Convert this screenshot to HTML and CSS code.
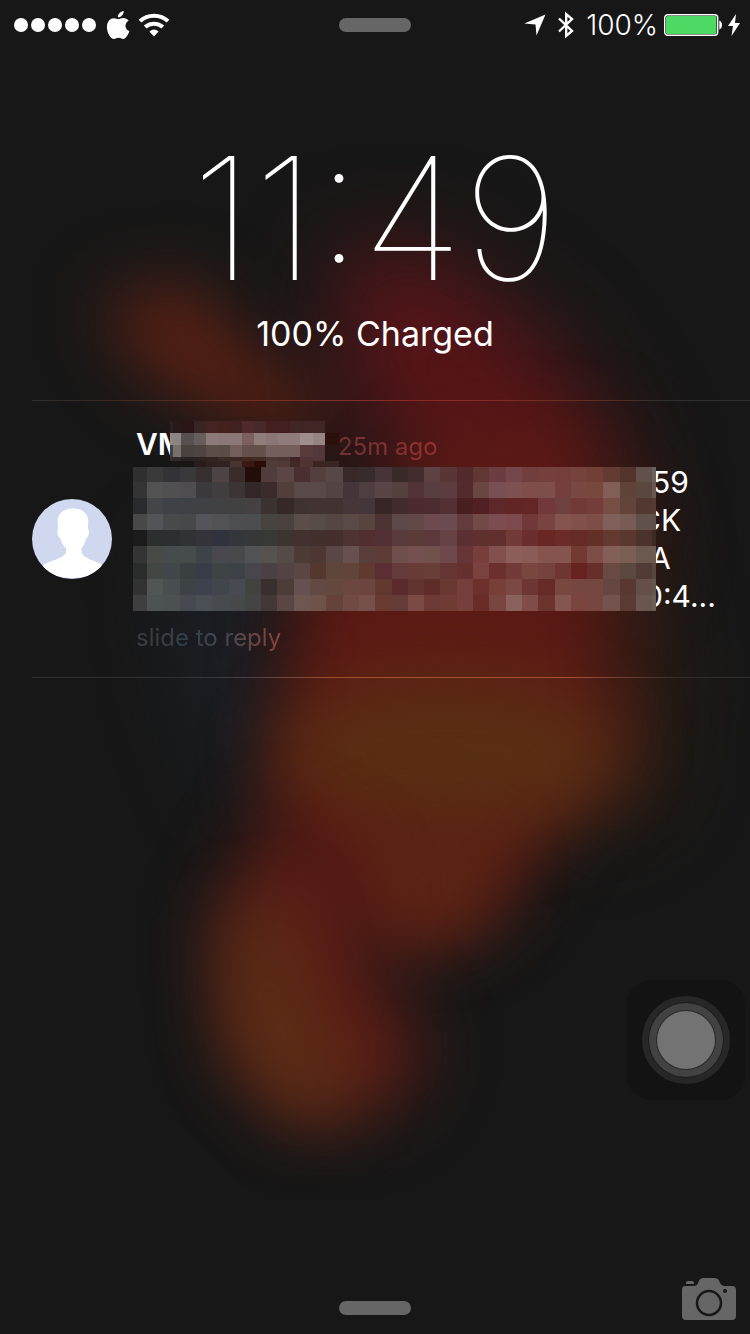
FILE: index.html
```
<!DOCTYPE html>
<html lang="en">
<head>
<meta charset="utf-8">
<meta name="viewport" content="width=device-width, initial-scale=1">
<title>Lock screen</title>
<link rel="stylesheet" href="styles.css">
</head>
<body>
<svg class="wallpaper" viewBox="0 0 750 1334" preserveAspectRatio="none" aria-hidden="true">
  <defs>
    <filter id="soft" x="-100%" y="-100%" width="300%" height="300%" color-interpolation-filters="sRGB"><feGaussianBlur stdDeviation="34"/></filter>
    <filter id="softer" x="-100%" y="-100%" width="300%" height="300%" color-interpolation-filters="sRGB"><feGaussianBlur stdDeviation="44"/></filter>
  </defs>
  <rect width="750" height="1334" fill="#171717"/>
  <path d="M100 300L190 280L250 350L330 400L310 450L210 410L140 370Z" fill="#5a2014" filter="url(#soft)"/>
  <path d="M330 260L420 240L550 340L620 440L640 560L560 620L450 500L350 420Z" fill="#561518" filter="url(#softer)"/>
  <path d="M590 400L650 520L680 660L670 800L590 850L600 600Z" fill="#2c1c14" filter="url(#soft)"/>
  <path d="M160 540H260L270 740L230 820L180 700Z" fill="#1b1e25" filter="url(#soft)"/>
  <path d="M300 570L450 430L570 430L610 600L620 740L560 820L490 920L400 960L330 900L270 790Z" fill="#5c1a14" filter="url(#soft)"/>
  <ellipse cx="450" cy="755" rx="170" ry="80" fill="#5a2e14" filter="url(#soft)"/>
  <ellipse cx="425" cy="880" rx="70" ry="55" fill="#5a2615" filter="url(#soft)"/>
  <path d="M270 810L350 850L380 980L430 1050L390 1110L300 1125L230 1050L215 920Z" fill="#5a1c16" filter="url(#soft)"/>
  <path d="M230 920L280 900L310 1010L360 1090L300 1120L235 1050Z" fill="#5c3016" filter="url(#soft)"/>
</svg>

<header class="status">
  <div class="status-side">
    <svg class="signal" width="82" height="14" viewBox="0 0 82 14" role="img" aria-label="Signal 5 of 5"><g fill="#fff"><circle cx="7" cy="7" r="7"/><circle cx="24" cy="7" r="7"/><circle cx="41" cy="7" r="7"/><circle cx="58" cy="7" r="7"/><circle cx="75" cy="7" r="7"/></g></svg>
    <svg width="24" height="28" viewBox="0 0 24 28" aria-hidden="true"><path fill="#fff" d="M17.800 0C17.900 3.300 15 6.500 11.900 6.300C11.600 3.200 14.700 .2 17.800 0ZM12.400 8.200C13.600 8.200 15.100 7 17.400 7C19.500 7 21.500 8 22.600 9.800C18 12.400 18.800 18.400 23.400 20.200C22.300 23.300 19.800 27.800 17.200 27.900C15.400 27.900 14.800 26.800 12.600 26.800C10.400 26.800 9.700 27.900 8 28C4.600 28 .9 21.600 .9 16C.9 10.300 4.500 7.200 7.800 7.200C9.800 7.200 11.400 8.200 12.400 8.200Z"/></svg>
    <svg width="32" height="24" viewBox="0 0 32 24" role="img" aria-label="Wi-Fi"><g fill="none" stroke="#fff" stroke-width="4"><path d="M2 8.200C9.500 .8 22.500 .8 30 8.200"/><path d="M7.200 14C12 9.500 20 9.500 24.800 14"/></g><path fill="#fff" d="M16 23.500L11.400 18.500Q16 14.500 20.600 18.500Z"/></svg>
  </div>
  <span class="grabber"></span>
  <div class="status-side status-right">
    <svg width="22" height="22" viewBox="0 0 22 22" role="img" aria-label="Location"><path fill="#fff" d="M21.500 .5L12.500 21.500L11.500 10.500L.3 9.500Z"/></svg>
    <svg class="bluetooth" width="16" height="28" viewBox="0 0 16 28" role="img" aria-label="Bluetooth"><path fill="none" stroke="#fff" stroke-width="2.400" d="M1 7.500L14 20L8.200 25V3L14 8L1 20.500"/></svg>
    <span class="percent">100%</span>
    <svg width="58" height="22" viewBox="0 0 58 22" role="img" aria-label="Battery full"><rect x=".7" y=".7" width="53" height="20.600" rx="3" fill="none" stroke="#fff" stroke-width="1.400"/><rect x="2" y="2" width="50.400" height="18" rx="1.500" fill="#4cd964"/><path fill="#fff" d="M55.300 6.500Q58 7.500 58 11T55.300 15.500Z"/></svg>
    <svg class="bolt" width="12" height="22" viewBox="0 0 12 22" role="img" aria-label="Charging"><path fill="#fff" d="M8 0L0 12H5L3.500 22L12 9H7Z"/></svg>
  </div>
</header>

<main class="screen">
  <section class="clock">
    <time class="time">11:49</time>
    <p class="charge">100% Charged</p>
  </section>

  <article class="notification">
    <svg class="avatar" viewBox="0 0 80 80" role="img" aria-label="Contact"><defs><clipPath id="round"><circle cx="40" cy="40" r="40"/></clipPath></defs><g clip-path="url(#round)"><rect width="80" height="80" fill="#d0d8f0"/><path fill="#fff" d="M26 26C24 15 31 9.500 41 9.500C51 9.500 58 15 56 26V30C58 31 57 38 54.500 39C53 43 52 47 49.500 49V54C53 60 62 61 70 66C67 75 53 79 40 79C27 79 14 75 11 66C20 61 30 60 34 54V49C31 47 29.500 43 28 39C25 38 25 31 26 30Z"/></g></svg>
    <div class="content">
      <div class="heading">
        <h2 class="sender">VM</h2>
        <span class="age">25m ago</span>
        <svg class="mask mask-name" width="169" height="46" viewBox="0 0 169 46" shape-rendering="crispEdges" aria-hidden="true"></svg>
      </div>
      <div class="message">
        <p><span class="gap" style="width:516px"></span>59</p>
        <p><span class="gap" style="width:503px"></span>CK</p>
        <p><span class="gap" style="width:514px"></span>A</p>
        <p><span class="gap" style="width:508px"></span>0:4...</p>
        <svg class="mask mask-text" width="523" height="144" viewBox="0 0 523 144" shape-rendering="crispEdges" aria-hidden="true"></svg>
      </div>
      <p class="hint">slide to reply</p>
    </div>
  </article>
</main>

<button class="assistive" type="button" aria-label="AssistiveTouch"><span class="ring"></span></button>

<footer class="bottom">
  <span class="grabber"></span>
  <button class="camera" type="button" aria-label="Camera"><svg width="54" height="42" viewBox="0 0 54 42"><path fill="#666" d="M4 6V5Q4 3 6 3H10Q12 3 12 5V6ZM3 8H13Q15 8 16 5L17 2.500Q18 0 21 0H33Q36 0 37 2.500L38 5Q39.500 8 42 8H50Q54 8 54 12V38Q54 42 50 42H4Q0 42 0 38V12Q0 8 3 8Z"/><circle cx="27" cy="25" r="12" fill="none" stroke="#171717" stroke-width="2.500"/><circle cx="43" cy="13" r="2" fill="#171717"/></svg></button>
</footer>
<script src="mosaic.js"></script>
</body>
</html>
```
FILE: styles.css
```
* {
  box-sizing: border-box;
}

body {
  position: relative;
  margin: 0;
  min-height: 100vh;
  display: flex;
  flex-direction: column;
  overflow-x: hidden;
  background: #171717;
  color: #fff;
  font-family: Inter, "Liberation Sans", sans-serif;
}

h2,
p {
  margin: 0;
}

svg {
  display: block;
  flex: none;
}

button {
  padding: 0;
  border: 0;
  background: none;
}

.wallpaper {
  position: absolute;
  inset: 0;
  width: 100%;
  height: 100%;
  z-index: -1;
}

.status {
  display: grid;
  grid-template-columns: 1fr auto 1fr;
  align-items: center;
  height: 50px;
  padding: 0 10px;
}

.status-side {
  display: flex;
  align-items: center;
  gap: 8px;
}

.status-right {
  justify-content: flex-end;
  gap: 6px;
}

.signal {
  margin: 0 2px 0 4px;
}

.bluetooth {
  margin: 0 6px;
}

.percent {
  font-size: 28px;
  font-weight: 300;
  line-height: 32px;
}

.grabber {
  width: 72px;
  height: 14px;
  border-radius: 7px;
  background: #666;
}

.clock {
  padding-top: 84px;
  text-align: center;
}

.time {
  display: block;
  font-size: 170px;
  font-weight: 100;
  line-height: 168px;
}

.charge {
  padding: 10px 0 44px;
  font-size: 34px;
  line-height: 44px;
}

.notification {
  display: flex;
  align-items: center;
  gap: 24px;
  margin-left: 32px;
  padding-bottom: 24px;
  background:
    linear-gradient(90deg, #303030, #3a2a20 10%, #7a3024 32%, #8c2a28 60%, #5a3020 80%, #303030 88%) top / 100% 1px no-repeat,
    linear-gradient(90deg, #303030 20%, #46404a 30%, #a0502c 42%, #a8503a 75%, #352c2a 90%, #303030) bottom / 100% 1px no-repeat;
}

.avatar {
  width: 80px;
  height: 80px;
  margin-top: 24px;
}

.content {
  flex: 1;
  min-width: 0;
}

.heading,
.message {
  position: relative;
}

.heading {
  display: flex;
  align-items: baseline;
  padding-top: 25px;
  height: 63px;
}

.sender {
  width: 202px;
  font-size: 30px;
  font-weight: 600;
  line-height: 38px;
}

.age {
  font-size: 24px;
  background: linear-gradient(90deg, #703030, #963030);
  background-clip: text;
  color: transparent;
}

.message {
  font-size: 30px;
  line-height: 38px;
  white-space: nowrap;
}

.gap {
  display: inline-block;
}

.mask {
  position: absolute;
}

.mask-name {
  left: 34px;
  top: 21px;
}

.mask-text {
  left: -3px;
  top: 4px;
}

.hint {
  width: max-content;
  padding-top: 7px;
  font-size: 24px;
  line-height: 32px;
  background: linear-gradient(90deg, #3c3c3e, #343f4a 35%, #4c464e 65%, #8a4438);
  background-clip: text;
  color: transparent;
}

.assistive {
  position: fixed;
  right: 4px;
  bottom: 234px;
  display: grid;
  place-items: center;
  width: 120px;
  height: 120px;
  border-radius: 26px;
  background: #131313;
}

.ring {
  width: 58px;
  height: 58px;
  border-radius: 50%;
  background: #737373;
  box-shadow: 0 0 0 1px #292929, 0 0 0 8px #424242, 0 0 0 9px #1c1c1c, 0 0 0 15px #272727;
}

.bottom {
  display: grid;
  grid-template-columns: 1fr auto 1fr;
  align-items: center;
  margin-top: auto;
  padding: 0 14px 14px;
}

.bottom .grabber {
  grid-column: 2;
  margin-top: 18px;
}

.camera {
  justify-self: end;
}
```
FILE: mosaic.js
```
const NS = "http://www.w3.org/2000/svg";

// Fills a mask with blocks; xs and ys are the block edges, rows the colours.
function drawMosaic(selector, xs, ys, rows) {
  const svg = document.querySelector(selector);
  rows.forEach((row, r) => {
    row.split(" ").forEach((color, c) => {
      if (color === "-") return;
      const rect = document.createElementNS(NS, "rect");
      rect.setAttribute("x", xs[c]);
      rect.setAttribute("y", ys[r]);
      rect.setAttribute("width", xs[c + 1] - xs[c]);
      rect.setAttribute("height", ys[r + 1] - ys[r]);
      rect.setAttribute("fill", "#" + color);
      svg.appendChild(rect);
    });
  });
}

const textEdges = [0];
for (let i = 0; i <= 31; i++) textEdges.push(Math.round(14 + i * 16.3));
textEdges.push(523);

drawMosaic(".mask-text", textEdges, [0, 15, 31, 47, 63, 79, 96, 112, 128, 144], [
  "2f2f2f 3a3a3a 333236 393939 352f2f 4d4345 3a2c2a 230d0b 503d3b 5c4645 47302f 523f3e 574847 362928 382b2b 473437 3a2929 432c2d 5f4242 5a3535 522a2b 603734 6c3d40 75474a 723d3d 743f3d 743e3b 75423c 713e38 623c33 53332c 62514b 6a615d",
  "343434 525252 505050 504d50 3b393c 423e40 3b3635 332627 3c2b2b 503f3b 594a49 594a49 534443 45353a 4e3e40 5a4546 54403e 523236 593e41 5c3c3e 532b2e 6b4542 784f52 7f5050 7e4d4c 7d4e4c 743f3d 794842 78483f 815f58 604239 5a483f 695850",
  "292a2b 444548 3e4146 3e4145 404144 414143 414141 454041 3b3332 362827 403231 423332 423332 46363a 44363a 382626 422b2c 4b2b30 4c2b31 523034 491e21 521f22 5c2829 622525 622626 72383b 6f413e 713a37 753d39 764e44 62443a 523831 533b32",
  "484848 535457 484a4a 464849 54545a 525155 4c4e4f 4b4e4e 464340 49413d 5b4e4a 574b48 554644 5a4a46 57443e 4c3434 5c4848 634849 6d4b50 6b4b52 643c3b 724a48 7c4c50 7c4a4d 703838 784340 85544e 82504b 7f4d47 80605a 785b54 62504a 5e5048",
  "1b1b1c 2b302f 2c2f2f 303235 34343a 30323d 33363a 363837 363936 3d3331 42312f 41302c 452f2c 4d3433 522e31 523033 593b3e 5b3b38 5c373c 674245 5c3032 60302f 612f2d 723a39 6c2d2e 692724 6b2c28 672b26 633028 633930 5a3830 4b332c 3b2b23",
  "343434 484b45 464b4c 464b4c 3d4346 49484e 49494c 505254 56524f 544a48 4d3c36 4c3733 5a4745 67504e 593e3b 5d3b36 704e4c 74514e 72504c 6e484a 663538 783e3c 81504f 8d5e5c 8b5b58 85544e 85544e 733a34 7f4d47 826059 7c5e54 6b584f 6d5b50",
  "2b2d2d 424744 40464a 3a4042 373c48 3e4346 3d4246 47464c 4b4145 544344 5a4744 54382e 60453b 61453b 60392f 5a2e32 643b3a 673b36 6a3e38 653534 66302e 7a413e 6b302e 713b38 7a4740 75423e 6f3631 66231f 672f2a 684a43 5d4840 513c35 57463c",
  "323232 515655 484e50 3d4246 3d424d 41464c 474a50 42423f 392f2f 4d3d39 655151 624943 634840 6c4641 6c4540 633830 5b2a2c 63332f 5e2d29 6a3833 743e3a 6d302d 783e38 7b4844 6e3632 662b26 784740 764640 764640 654640 583830 655049 65564b",
  "3f3f3f 4d5352 4b5153 464a50 4a4f56 474b50 474849 454444 433738 5a4745 6d5750 6e534a 65423b 704a44 76504a 683a32 653b37 7b4a45 6e3a36 713b35 773f3b 692c29 784540 8b615e 804c48 6a332e 85554f 7b453f 754740 74534f 5b3a33 69564e 6d5f56"
]);

drawMosaic(".mask-name", [0, 3, 11, 24, 36, 48, 60, 72, 84, 96, 108, 120, 130, 143, 155, 169], [0, 12, 24, 36, 40, 46], [
  "2c2020 281919 291516 382422 452323 42211f 412020 4e2a2b 482929 43201f 43201f 422625 402524 402524 -",
  "8c8888 8a8583 575050 675d5c 8b7a78 8b7876 8b7876 7c6060 8f7d7a 8a7775 907c7a 907c7a a08e8d 968482 2a0f0b",
  "434040 77706e 49423f 4e4542 5d4d49 5c4c48 735e5b 66504b 65504a 755f5d 755f5c 755e5c 5a3b3b 54373a -",
  "332f2f 302a2a 292222 2c2220 302320 3b2c27 3a2622 46271f 422b23 4b3834 4a3533 402226 513536 513637 -",
  "- - - 2b1c1b 302120 2f2220 4a3430 381812 2a0d08 523c39 513a37 402a28 503431 3c2520 3a2523"
]);
```
